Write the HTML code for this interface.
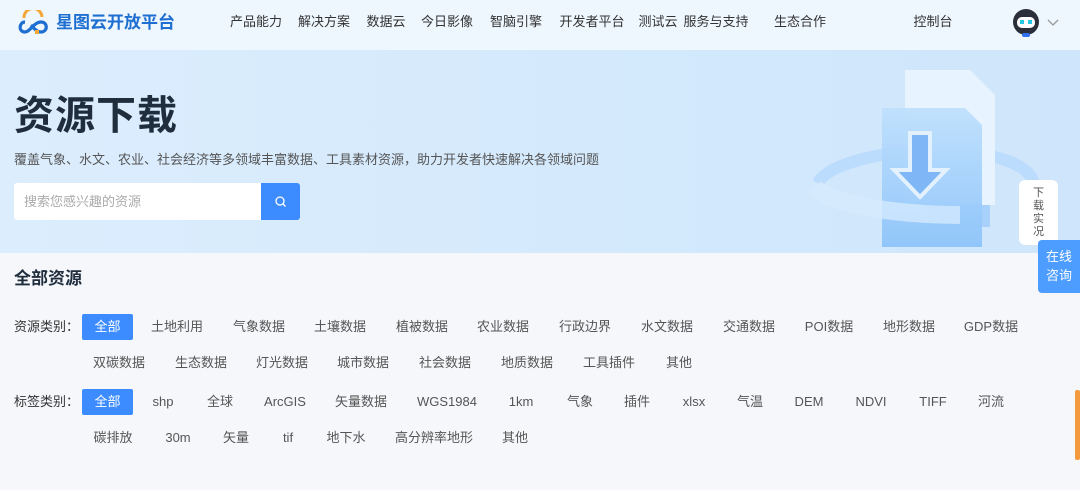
<!DOCTYPE html>
<html><head><meta charset="utf-8"><style>
*{margin:0;padding:0;box-sizing:border-box}
body{width:1080px;height:490px;overflow:hidden;background:#f5f7fa;font-family:"Liberation Sans","Noto Sans CJK SC",sans-serif;position:relative;color:#333}
.a{position:absolute;white-space:nowrap}
.c{transform:translateX(-50%)}
.hdr{position:absolute;left:0;top:0;width:1080px;height:50px;background:#eef6fe}
.nav{font-size:13px;color:#333;top:13px;line-height:18px;height:18px}
.ban{position:absolute;left:0;top:50px;width:1080px;height:203px;background:linear-gradient(90deg,#dcedfd 0%,#d3e9fc 60%,#cfe5fb 100%)}
.t{font-size:13px;color:#555;line-height:18px;height:18px}
.sel{background:#3c8cff;color:#fff;border-radius:2px;width:51px;height:26px;line-height:26px;text-align:center;font-size:13px}
</style></head><body>
<div class="hdr"></div>
<svg class="a" style="left:16px;top:10px" width="36" height="26" viewBox="0 0 36 26"><path d="M8 8 A9 9 0 0 1 26 7" fill="none" stroke="#f4a636" stroke-width="3"/><path d="M9 12 C3 12 2 22 9 22 C14 22 18 12 25 12 C32 12 32 22 25 22 C20 22 17 17 15 15" fill="none" stroke="#1f6fd1" stroke-width="3.2"/><rect x="19" y="20" width="4" height="4" fill="#f4a636"/></svg>
<div class="a" style="left:56px;top:12px;font-size:17px;line-height:22px;font-weight:bold;color:#1f6fd1">星图云开放平台</div>
<div class="a nav c" style="left:256px">产品能力</div>
<div class="a nav c" style="left:324px">解决方案</div>
<div class="a nav c" style="left:386px">数据云</div>
<div class="a nav c" style="left:447px">今日影像</div>
<div class="a nav c" style="left:516px">智脑引擎</div>
<div class="a nav c" style="left:592px">开发者平台</div>
<div class="a nav c" style="left:658px">测试云</div>
<div class="a nav c" style="left:716px">服务与支持</div>
<div class="a nav c" style="left:800px">生态合作</div>
<div class="a nav c" style="left:933px">控制台</div>
<svg class="a" style="left:1010px;top:8px" width="50" height="30" viewBox="0 0 50 30"><circle cx="16" cy="14" r="13" fill="#2a2f3a"/><rect x="7" y="9" width="18" height="11" rx="5" fill="#fff"/><rect x="10" y="12" width="4" height="4" fill="#2ac6e6"/><rect x="18" y="12" width="4" height="4" fill="#2ac6e6"/><rect x="12" y="25" width="8" height="4" rx="2" fill="#2f6ff0"/><path d="M38 12 l5 5 l5 -5" fill="none" stroke="#999" stroke-width="1.3"/></svg>
<div class="ban"></div>
<div class="a" style="left:14px;top:92px;font-size:40px;line-height:48px;font-weight:bold;color:#1f2d3d;letter-spacing:1px">资源下载</div>
<div class="a" style="left:14px;top:151px;font-size:13px;line-height:18px;color:#555">覆盖气象、水文、农业、社会经济等多领域丰富数据、工具素材资源，助力开发者快速解决各领域问题</div>
<div class="a" style="left:14px;top:183px;width:247px;height:37px;background:#fff;border-radius:3px 0 0 3px"></div>
<div class="a" style="left:24px;top:193px;font-size:13px;line-height:18px;color:#aaa">搜索您感兴趣的资源</div>
<div class="a" style="left:261px;top:183px;width:39px;height:37px;background:#3c8cff;border-radius:0 3px 3px 0"></div>
<svg class="a" style="left:274px;top:195px" width="13" height="13" viewBox="0 0 13 13"><circle cx="6" cy="6" r="4" fill="none" stroke="#fff" stroke-width="1.3"/><path d="M9 9l2.5 2.5" stroke="#fff" stroke-width="1.3"/></svg>
<svg class="a" style="left:810px;top:65px" width="230" height="185" viewBox="0 0 230 185">
<defs><linearGradient id="g1" x1="0" y1="0" x2="0" y2="1"><stop offset="0" stop-color="#bfe0fd"/><stop offset="1" stop-color="#8ec4fa"/></linearGradient></defs>
<path d="M8 118 C20 95 90 85 120 85 C180 85 235 100 222 130" fill="none" stroke="#b7d9fb" stroke-width="12" opacity=".85"/>
<path d="M115 45 L165 45 L180 62 L180 162 L115 162 Z" fill="#a7d0fb"/>
<path d="M95 5 L160 5 L185 30 L185 140 L95 140 Z" fill="#e7f3fe"/>
<path d="M72 43 L155 43 L172 60 L172 182 L72 182 Z" fill="url(#g1)" opacity=".95"/>
<path d="M100 68 L120 68 L120 105 L136 105 L110 132 L84 105 L100 105 Z" fill="#7fb6f6" stroke="#e3f1ff" stroke-width="4"/>
<path d="M4 122 C20 140 90 150 150 150" fill="none" stroke="#d7ebfd" stroke-width="18" opacity=".75"/>
</svg>
<div class="a" style="left:1019px;top:180px;width:39px;height:65px;background:#fff;border-radius:6px;font-size:11px;color:#555;line-height:13px;text-align:center;padding-top:7px">下<br>载<br>实<br>况</div>
<div class="a" style="left:1038px;top:240px;width:42px;height:53px;background:#4d9cff;border-radius:4px 0 0 4px;font-size:13px;color:#fff;line-height:19px;text-align:center;padding-top:7px">在线<br>咨询</div>
<div class="a" style="left:1075px;top:390px;width:5px;height:70px;background:#f59a3c;border-radius:2px"></div>
<div class="a" style="left:14px;top:267px;font-size:17px;line-height:24px;font-weight:bold;color:#1f2d3d">全部资源</div>
<div class="a t" style="left:14px;top:318px;color:#333">资源类别：</div>
<div class="a t" style="left:14px;top:393px;color:#333">标签类别：</div>
<div class="a sel" style="left:82px;top:314px">全部</div>
<div class="a sel" style="left:82px;top:389px">全部</div>
<div class="a t c" style="left:177px;top:318px">土地利用</div>
<div class="a t c" style="left:259px;top:318px">气象数据</div>
<div class="a t c" style="left:340px;top:318px">土壤数据</div>
<div class="a t c" style="left:422px;top:318px">植被数据</div>
<div class="a t c" style="left:503px;top:318px">农业数据</div>
<div class="a t c" style="left:585px;top:318px">行政边界</div>
<div class="a t c" style="left:667px;top:318px">水文数据</div>
<div class="a t c" style="left:749px;top:318px">交通数据</div>
<div class="a t c" style="left:829px;top:318px">POI数据</div>
<div class="a t c" style="left:909px;top:318px">地形数据</div>
<div class="a t c" style="left:991px;top:318px">GDP数据</div>
<div class="a t c" style="left:119px;top:354px">双碳数据</div>
<div class="a t c" style="left:201px;top:354px">生态数据</div>
<div class="a t c" style="left:282px;top:354px">灯光数据</div>
<div class="a t c" style="left:363px;top:354px">城市数据</div>
<div class="a t c" style="left:445px;top:354px">社会数据</div>
<div class="a t c" style="left:527px;top:354px">地质数据</div>
<div class="a t c" style="left:609px;top:354px">工具插件</div>
<div class="a t c" style="left:679px;top:354px">其他</div>
<div class="a t c" style="left:163px;top:393px">shp</div>
<div class="a t c" style="left:220px;top:393px">全球</div>
<div class="a t c" style="left:285px;top:393px">ArcGIS</div>
<div class="a t c" style="left:361px;top:393px">矢量数据</div>
<div class="a t c" style="left:447px;top:393px">WGS1984</div>
<div class="a t c" style="left:521px;top:393px">1km</div>
<div class="a t c" style="left:580px;top:393px">气象</div>
<div class="a t c" style="left:637px;top:393px">插件</div>
<div class="a t c" style="left:694px;top:393px">xlsx</div>
<div class="a t c" style="left:750px;top:393px">气温</div>
<div class="a t c" style="left:809px;top:393px">DEM</div>
<div class="a t c" style="left:871px;top:393px">NDVI</div>
<div class="a t c" style="left:933px;top:393px">TIFF</div>
<div class="a t c" style="left:991px;top:393px">河流</div>
<div class="a t c" style="left:113px;top:429px">碳排放</div>
<div class="a t c" style="left:178px;top:429px">30m</div>
<div class="a t c" style="left:236px;top:429px">矢量</div>
<div class="a t c" style="left:288px;top:429px">tif</div>
<div class="a t c" style="left:346px;top:429px">地下水</div>
<div class="a t c" style="left:434px;top:429px">高分辨率地形</div>
<div class="a t c" style="left:515px;top:429px">其他</div>
</body></html>
